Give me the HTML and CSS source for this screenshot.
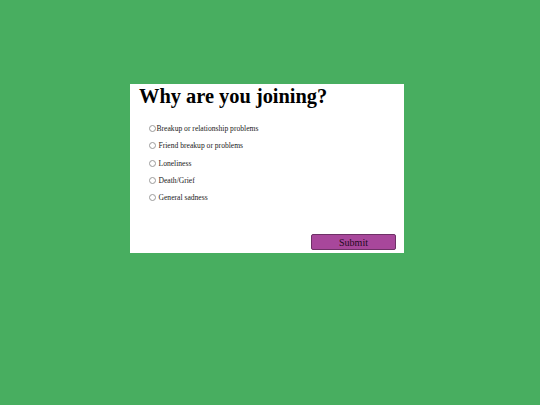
FILE: index.html
```html
<!DOCTYPE html>
<html>
<head>
<meta charset="utf-8">
<link rel="stylesheet" href="styles.css">
</head>
<body>
<div class="card">
  <h1 class="title">Why are you joining?</h1>
  <div class="options">
    <label class="option"><span class="radio"></span><span class="label tight">Breakup or relationship problems</span></label>
    <label class="option"><span class="radio"></span><span class="label">Friend breakup or problems</span></label>
    <label class="option"><span class="radio"></span><span class="label">Loneliness</span></label>
    <label class="option"><span class="radio"></span><span class="label">Death/Grief</span></label>
    <label class="option"><span class="radio"></span><span class="label">General sadness</span></label>
  </div>
  <button class="submit">Submit</button>
</div>
</body>
</html>
```
FILE: styles.css
```css
html, body {
  margin: 0;
  padding: 0;
}
body {
  background: #48ae60;
  width: 540px;
  height: 405px;
  padding-top: 84px;
  box-sizing: border-box;
  font-family: "Liberation Serif", "Times New Roman", serif;
}
.card {
  margin-left: 130px;
  width: 274px;
  height: 169px;
  background: #ffffff;
  display: flex;
  flex-direction: column;
}
.title {
  margin: 0;
  padding: 0 9px;
  font-size: 20.4px;
  line-height: 24px;
  font-weight: bold;
  color: #000;
}
.options {
  margin-top: 12px;
  padding-left: 19px;
  display: flex;
  flex-direction: column;
}
.option {
  height: 17.25px;
  display: flex;
  align-items: center;
  font-size: 7.6px;
  color: #1a1a1a;
}
.radio {
  width: 5px;
  height: 5px;
  border: 0.6px solid #9a9a9a;
  border-radius: 50%;
  box-sizing: content-box;
  flex: none;
}
.label {
  margin-left: 2.5px;
}
.label.tight {
  margin-left: 0.5px;
}
.submit {
  margin-top: auto;
  margin-bottom: 3px;
  margin-right: 8px;
  align-self: flex-end;
  width: 85px;
  height: 16px;
  padding: 0;
  background: #a8479b;
  border: 1px solid #6e3166;
  border-radius: 2px;
  font-family: "Liberation Serif", "Times New Roman", serif;
  font-size: 10px;
  color: #1e0a1c;
}
```
